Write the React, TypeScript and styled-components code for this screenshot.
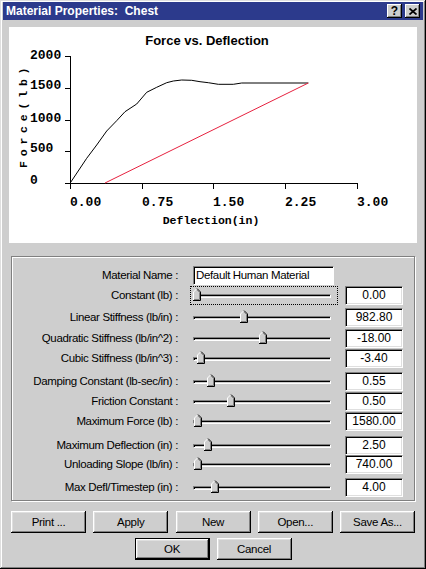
import React from "react";
import styled, { createGlobalStyle } from "styled-components";

const GlobalStyle = createGlobalStyle`
	html, body {
		margin: 0;
		padding: 0;
		background: #cecece;
	}
	body {
		font-family: "Liberation Sans", Arial, sans-serif;
	}
`;

const Window = styled.div`
	width: 426px;
	height: 569px;
	box-sizing: border-box;
	padding: 2px 3px 3px;
	background: #cecece;
	box-shadow: inset -1px -1px #000, inset 1px 1px #dfdfdf,
		inset -2px -2px #808080, inset 2px 2px #fff;
	display: flex;
	flex-direction: column;
`;
const TitleBar = styled.div`
	height: 18px;
	background: #2c3a8c;
	color: #fff;
	display: flex;
	align-items: center;
	justify-content: space-between;
	padding: 0 3px 0 3px;
`;
const TitleText = styled.span`
	font-weight: bold;
	font-size: 12px;
	white-space: pre;
`;
const CaptionButtons = styled.div`
	display: flex;
	gap: 3px;
`;
const CaptionButton = styled.div`
	width: 15px;
	height: 14px;
	box-sizing: border-box;
	background: #cecece;
	color: #000;
	display: flex;
	align-items: center;
	justify-content: center;
	font-weight: bold;
	font-size: 12px;
	box-shadow: inset -1px -1px #000, inset 1px 1px #fff, inset -2px -2px #808080;
`;
const ChartPanel = styled.div`
	margin: 7px 6px 0;
	height: 216px;
	background: #fff;
	svg {
		display: block;
	}
`;
const GroupBox = styled.div`
	margin: 13px 8px 0;
	height: 245px;
	box-sizing: border-box;
	border: 1px solid #808080;
	box-shadow: inset 1px 1px #fff, 1px 1px #fff;
	padding-top: 9px;
`;
const Row = styled.div<{ $space: number }>`
	display: flex;
	align-items: center;
	height: 19px;
	margin-top: ${(p) => p.$space}px;
`;
const Label = styled.div`
	width: 166px;
	margin-right: 12px;
	text-align: right;
	font-size: 11.5px;
	letter-spacing: -0.35px;
	line-height: 19px;
	white-space: nowrap;
	color: #000;
`;
const NameField = styled.div`
	margin-left: 3px;
	width: 141px;
	height: 19px;
	box-sizing: border-box;
	background: #fff;
	border: 1px solid;
	border-color: #808080 #fff #fff #808080;
	box-shadow: inset 1px 1px #000;
	padding-left: 2px;
	font-size: 11.5px;
	letter-spacing: -0.35px;
	line-height: 17px;
	white-space: nowrap;
`;
const SliderBox = styled.div<{ $focus?: boolean }>`
	position: relative;
	width: 148px;
	height: 19px;
	box-sizing: border-box;
	outline: ${(p) => (p.$focus ? "1px dotted #000" : "none")};
	outline-offset: -1px;
`;
const Track = styled.div`
	margin: 8px 7px 0 3px;
	height: 4px;
	box-sizing: border-box;
	border: 1px solid;
	border-color: #808080 #fff #fff #808080;
	box-shadow: inset 1px 1px #000;
`;
const ThumbWrap = styled.div`
	position: absolute;
	top: 2px;
	width: 8px;
	height: 13px;
	svg {
		display: block;
	}
`;
const ValueBox = styled.div`
	margin-left: 7px;
	width: 58px;
	height: 19px;
	box-sizing: border-box;
	background: #fff;
	border: 1px solid;
	border-color: #808080 #fff #fff #808080;
	box-shadow: inset 1px 1px #000, inset -1px -1px #dfdfdf;
	text-align: center;
	font-size: 12px;
	line-height: 17px;
`;
const ButtonRow = styled.div<{ $center?: boolean }>`
	display: flex;
	margin: ${(p) => (p.$center ? "5px 8px 0" : "10px 8px 0")};
	justify-content: ${(p) => (p.$center ? "center" : "space-between")};
	gap: 7px;
`;
const Button = styled.div<{ $default?: boolean }>`
	width: 75px;
	height: 22px;
	box-sizing: border-box;
	background: #cecece;
	display: flex;
	align-items: center;
	justify-content: center;
	font-size: 11.5px;
	letter-spacing: -0.3px;
	color: #000;
	border: ${(p) => (p.$default ? "1px solid #000" : "none")};
	box-shadow: inset -1px -1px #000, inset 1px 1px #fff,
		inset -2px -2px #808080, inset 2px 2px #dfdfdf;
`;

const sliders = [
	{ label: "Constant (lb) :", value: "0.00", pos: 0, space: 1, focus: true },
	{ label: "Linear Stiffness (lb/in) :", value: "982.80", pos: 36.7, space: 3 },
	{ label: "Quadratic Stiffness (lb/in^2) :", value: "-18.00", pos: 51.6, space: 2 },
	{ label: "Cubic Stiffness (lb/in^3) :", value: "-3.40", pos: 3.1, space: 1 },
	{ label: "Damping Constant (lb-sec/in) :", value: "0.55", pos: 10.9, space: 4 },
	{ label: "Friction Constant :", value: "0.50", pos: 26.6, space: 1 },
	{ label: "Maximum Force (lb) :", value: "1580.00", pos: 0.8, space: 1 },
	{ label: "Maximum Deflection (in) :", value: "2.50", pos: 8.6, space: 5 },
	{ label: "Unloading Slope (lb/in) :", value: "740.00", pos: 0.8, space: 0 },
	{ label: "Max Defl/Timestep (in) :", value: "4.00", pos: 14, space: 4 },
];

const curve = [
	[70, 183.3], [86.7, 158.3], [96.7, 145], [106.7, 131], [116.7, 120.7],
	[125, 111.7], [136.7, 104], [146.7, 92.3], [156.7, 87.3], [166.7, 82.7],
	[173.3, 81], [181.7, 80], [191.7, 80.3], [200, 81.7], [208.3, 82.7],
	[218.3, 84.3], [233.3, 84.3], [241.7, 83], [308.3, 83],
];

const yTicks = [
	{ y: 56.5, text: "2000", base: 58.5 },
	{ y: 88.5, text: "1500", base: 89 },
	{ y: 120.5, text: "1000", base: 122 },
	{ y: 151.5, text: "500", base: 152 },
	{ y: 183.5, text: "0", base: 184 },
];
const xTicks = [
	{ x: 70.5, text: "0.00" },
	{ x: 142.5, text: "0.75" },
	{ x: 213.5, text: "1.50" },
	{ x: 285.5, text: "2.25" },
	{ x: 357.5, text: "3.00" },
];

const mono = '"Liberation Mono", "Courier New", monospace';

function Chart() {
	return (
		<svg width="408" height="216" viewBox="9 27 408 216">
			<text
				x="207"
				y="45"
				textAnchor="middle"
				fontFamily='"Liberation Sans", Arial, sans-serif'
				fontWeight="bold"
				fontSize="13"
			>
				Force vs. Deflection
			</text>
			<g stroke="#000" strokeWidth="1" shapeRendering="crispEdges">
				<line x1="70.5" y1="56" x2="70.5" y2="184" />
				<line x1="65" y1="183.5" x2="358" y2="183.5" />
				{yTicks.map((t) => (
					<line key={t.text} x1="65" y1={t.y} x2="70" y2={t.y} />
				))}
				{xTicks.map((t) => (
					<line key={t.text} x1={t.x} y1="183" x2={t.x} y2="189" />
				))}
			</g>
			<g fontFamily={mono} fontWeight="bold" fontSize="13">
				{yTicks.map((t) => (
					<text key={t.text} x="30" y={t.base}>
						{t.text}
					</text>
				))}
				{xTicks.map((t) => (
					<text key={t.text} x={t.x - 0.5} y="206">
						{t.text}
					</text>
				))}
			</g>
			<text
				x="211"
				y="224"
				textAnchor="middle"
				fontFamily={mono}
				fontWeight="bold"
				fontSize="11.5"
			>
				Deflection(in)
			</text>
			<text
				transform="translate(27,168) rotate(-90)"
				fontFamily={mono}
				fontWeight="bold"
				fontSize="11.5"
				letterSpacing="4.8"
			>
				Force(lb)
			</text>
			<polyline
				points={curve.map((p) => p.join(",")).join(" ")}
				fill="none"
				stroke="#000"
				strokeWidth="1"
			/>
			<line x1="105" y1="183" x2="308.3" y2="83" stroke="#e6213f" strokeWidth="1" />
		</svg>
	);
}

function Thumb() {
	return (
		<svg width="8" height="13" viewBox="0 0 8 13">
			<polygon points="0.5,12.5 0.5,4 4,0.5 7.5,4 7.5,12.5" fill="#cecece" />
			<polyline points="0.5,12 0.5,4 4,0.5" fill="none" stroke="#fff" />
			<polyline points="4,0.5 7.5,4 7.5,12.5 0,12.5" fill="none" stroke="#000" />
			<polyline points="4,1.8 6.5,4.3 6.5,11.5 1,11.5" fill="none" stroke="#808080" />
		</svg>
	);
}

function App() {
	return (
		<>
			<GlobalStyle />
			<Window>
				<TitleBar>
					<TitleText>{"Material Properties:  Chest"}</TitleText>
					<CaptionButtons>
						<CaptionButton>?</CaptionButton>
						<CaptionButton>
							<svg width="8" height="7" viewBox="0 0 8 7">
								<path d="M0.5 0.5 L7.5 6.5 M7.5 0.5 L0.5 6.5" stroke="#000" strokeWidth="1.7" />
							</svg>
						</CaptionButton>
					</CaptionButtons>
				</TitleBar>
				<ChartPanel>
					<Chart />
				</ChartPanel>
				<GroupBox>
					<Row $space={0}>
						<Label>Material Name :</Label>
						<NameField>Default Human Material</NameField>
					</Row>
					{sliders.map((s) => (
						<Row key={s.label} $space={s.space}>
							<Label>{s.label}</Label>
							<SliderBox $focus={s.focus}>
								<Track />
								<ThumbWrap style={{ left: 3 + s.pos * 1.28 }}>
									<Thumb />
								</ThumbWrap>
							</SliderBox>
							<ValueBox>{s.value}</ValueBox>
						</Row>
					))}
				</GroupBox>
				<ButtonRow>
					<Button>Print ...</Button>
					<Button>Apply</Button>
					<Button>New</Button>
					<Button>Open...</Button>
					<Button>Save As...</Button>
				</ButtonRow>
				<ButtonRow $center>
					<Button $default>OK</Button>
					<Button>Cancel</Button>
				</ButtonRow>
			</Window>
		</>
	);
}

export default App;
